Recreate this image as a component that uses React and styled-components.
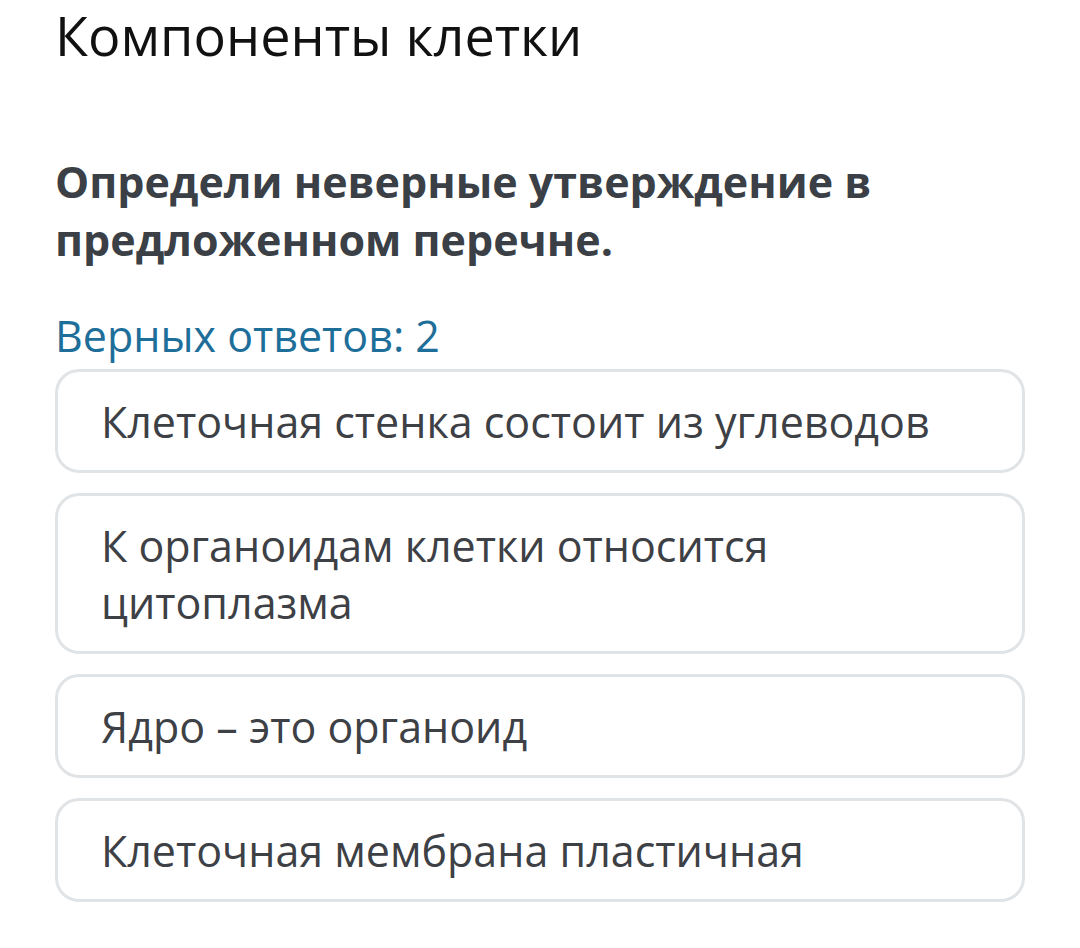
import React from "react";
import styled, { createGlobalStyle } from "styled-components";

const GlobalStyle = createGlobalStyle`
  html, body {
    margin: 0;
    padding: 0;
    background: #fff;
    font-family: "Open Sans", "Noto Sans", sans-serif;
  }
`;

const Page = styled.div`
  width: 1080px;
  height: 948px;
  box-sizing: border-box;
  padding: 0 55px;
  overflow: hidden;
`;

const Title = styled.h1`
  margin: 0;
  padding-top: 2px;
  font-size: 54px;
  line-height: 66px;
  font-weight: 400;
  color: #111;
`;

const Question = styled.h2`
  margin: 85px 0 0;
  font-size: 43px;
  line-height: 58px;
  font-weight: 700;
  color: #3b3f46;
`;

const Counter = styled.div`
  margin-top: 41px;
  font-size: 43px;
  line-height: 52px;
  color: #1d6e99;
`;

const Options = styled.div`
  display: flex;
  flex-direction: column;
  gap: 20px;
  margin-top: 7px;
`;

const Option = styled.div`
  border: 3px solid #e1e4e6;
  border-radius: 24px;
  padding: 21px 43px 20px;
  font-size: 43px;
  line-height: 57px;
  color: #3d4045;
`;

const options = [
  "Клеточная стенка состоит из углеводов",
  "К органоидам клетки относится цитоплазма",
  "Ядро – это органоид",
  "Клеточная мембрана пластичная",
];

export default function App() {
  return (
    <Page>
      <GlobalStyle />
      <Title>Компоненты клетки</Title>
      <Question>Определи неверные утверждение в предложенном перечне.</Question>
      <Counter>Верных ответов: 2</Counter>
      <Options>
        {options.map((o) => (
          <Option key={o}>{o}</Option>
        ))}
      </Options>
    </Page>
  );
}
